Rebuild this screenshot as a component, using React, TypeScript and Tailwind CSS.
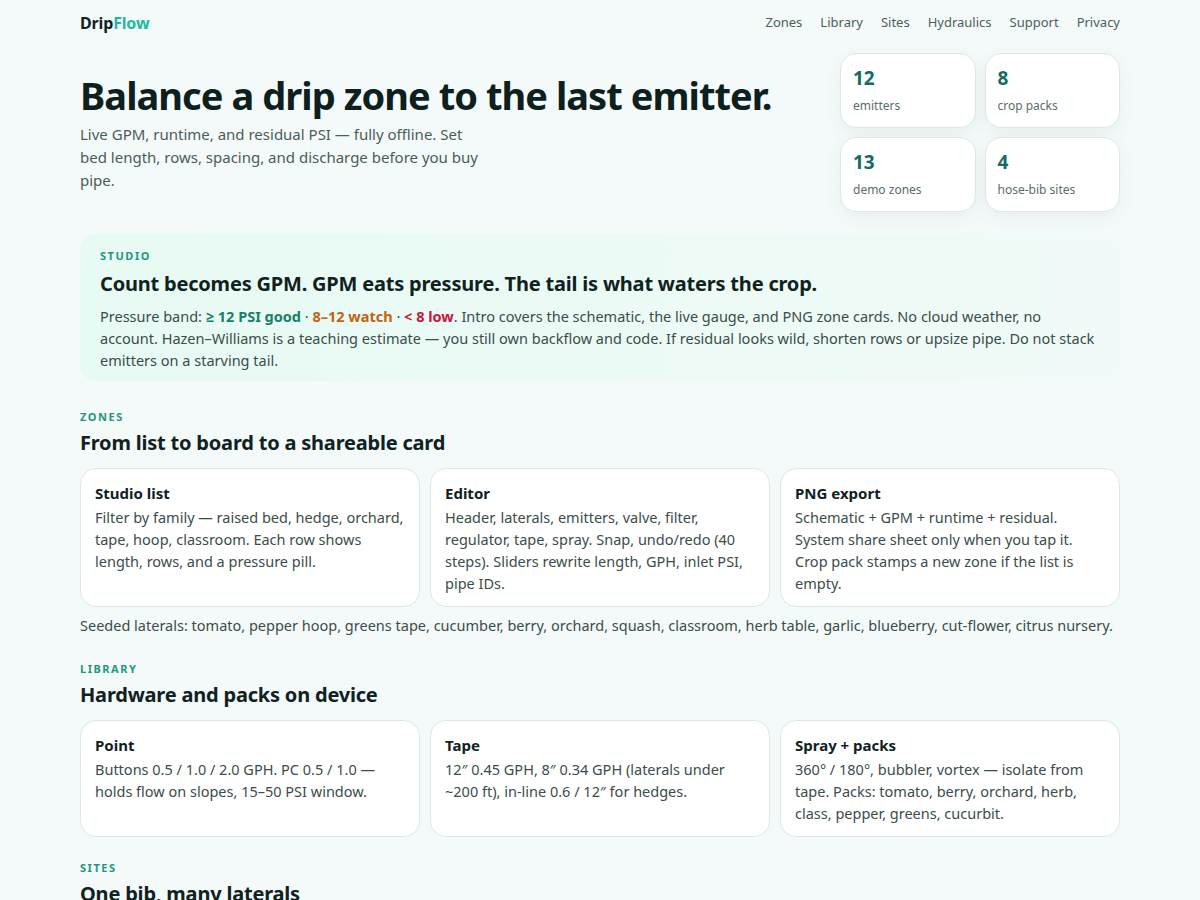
import React from "react";

type Card = { title: string; body: string };

const stats = [
  { value: "12", label: "emitters" },
  { value: "8", label: "crop packs" },
  { value: "13", label: "demo zones" },
  { value: "4", label: "hose-bib sites" },
];

const zoneCards: Card[] = [
  {
    title: "Studio list",
    body: "Filter by family — raised bed, hedge, orchard, tape, hoop, classroom. Each row shows length, rows, and a pressure pill.",
  },
  {
    title: "Editor",
    body: "Header, laterals, emitters, valve, filter, regulator, tape, spray. Snap, undo/redo (40 steps). Sliders rewrite length, GPH, inlet PSI, pipe IDs.",
  },
  {
    title: "PNG export",
    body: "Schematic + GPM + runtime + residual. System share sheet only when you tap it. Crop pack stamps a new zone if the list is empty.",
  },
];

const libraryCards: Card[] = [
  {
    title: "Point",
    body: "Buttons 0.5 / 1.0 / 2.0 GPH. PC 0.5 / 1.0 — holds flow on slopes, 15–50 PSI window.",
  },
  {
    title: "Tape",
    body: "12″ 0.45 GPH, 8″ 0.34 GPH (laterals under ~200 ft), in-line 0.6 / 12″ for hedges.",
  },
  {
    title: "Spray + packs",
    body: "360° / 180°, bubbler, vortex — isolate from tape. Packs: tomato, berry, orchard, herb, class, pepper, greens, cucurbit.",
  },
];

const navLinks = ["Zones", "Library", "Sites", "Hydraulics", "Support", "Privacy"];

function Eyebrow({ children }: { children: React.ReactNode }) {
  return (
    <div className="text-[11px] font-bold uppercase tracking-[0.14em] text-[#1f9683] leading-none">
      {children}
    </div>
  );
}

function CardGrid({ cards, tall }: { cards: Card[]; tall?: boolean }) {
  return (
    <div className="grid grid-cols-3 gap-[10px]">
      {cards.map((c) => (
        <div
          key={c.title}
          className={`rounded-2xl border border-[#dbe9e6] bg-white px-[14px] pt-[14px] pb-[12px] ${
            tall ? "min-h-[115px]" : ""
          }`}
        >
          <div className="text-[15px] font-bold leading-[20px] text-[#10221f]">{c.title}</div>
          <p className="mt-[3px] text-[14.5px] leading-[22px] text-[#3a4d4a]">{c.body}</p>
        </div>
      ))}
    </div>
  );
}

export default function App() {
  return (
    <div
      className="min-h-screen bg-[#f4faf9] text-[#10221f]"
      style={{ fontFamily: '"Noto Sans", "Open Sans", sans-serif' }}
    >
      <div className="mx-auto w-[1040px]">
        {/* top bar */}
        <header className="flex h-[46px] items-center justify-between">
          <div className="text-[16px] font-bold tracking-[-0.01em]">
            <span className="text-[#10221f]">Drip</span>
            <span className="text-[#22b8a0]">Flow</span>
          </div>
          <nav className="flex gap-[18px] text-[13px] text-[#4b5e5b]">
            {navLinks.map((n) => (
              <span key={n}>{n}</span>
            ))}
          </nav>
        </header>

        {/* hero */}
        <section className="mt-[7px] flex items-start justify-between">
          <div className="min-w-0 flex-1 pt-[18px]">
            <h1 className="whitespace-nowrap text-[38px] font-bold leading-[48px] tracking-[-0.025em] text-[#0d201d]">
              Balance a drip zone to the last emitter.
            </h1>
            <p className="mt-[4px] w-[410px] text-[15px] leading-[23px] text-[#4a5d5a]">
              Live GPM, runtime, and residual PSI — fully offline. Set bed length, rows, spacing, and
              discharge before you buy pipe.
            </p>
          </div>
          <div className="grid w-[280px] shrink-0 grid-cols-2 gap-[9px]">
            {stats.map((s) => (
              <div
                key={s.label}
                className="h-[75px] rounded-2xl border border-[#d9e9e5] bg-white px-[12px] pt-[12px] shadow-[0_6px_18px_rgba(20,90,80,0.06)]"
              >
                <div className="text-[19px] font-bold leading-[24px] text-[#146b60]">{s.value}</div>
                <div className="mt-[8px] text-[12px] leading-[16px] text-[#5a6d6a]">{s.label}</div>
              </div>
            ))}
          </div>
        </section>

        {/* studio callout */}
        <section className="mt-[22px] rounded-2xl bg-gradient-to-r from-[#e7faf3] to-[#f1faf8] px-[20px] pt-[16px] pb-[10px]">
          <Eyebrow>Studio</Eyebrow>
          <h2 className="mt-[9px] text-[20px] font-bold leading-[28px] tracking-[-0.01em] text-[#10221f]">
            Count becomes GPM. GPM eats pressure. The tail is what waters the crop.
          </h2>
          <p className="mt-[7px] text-[14.5px] leading-[22px] text-[#3a4d4a]">
            Pressure band: <b className="text-[#15806c]">≥ 12 PSI good</b> ·{" "}
            <b className="text-[#c4620f]">8–12 watch</b> · <b className="text-[#c8163e]">&lt; 8 low</b>.
            Intro covers the schematic, the live gauge, and PNG zone cards. No cloud weather, no
            account. Hazen–Williams is a teaching estimate — you still own backflow and code. If
            residual looks wild, shorten rows or upsize pipe. Do not stack emitters on a starving
            tail.
          </p>
        </section>

        {/* zones */}
        <section className="mt-[30px]">
          <Eyebrow>Zones</Eyebrow>
          <h2 className="mt-[7px] text-[20px] font-bold leading-[28px] tracking-[-0.01em]">
            From list to board to a shareable card
          </h2>
          <div className="mt-[11px]">
            <CardGrid cards={zoneCards} />
          </div>
          <p className="mt-[7px] text-[14.5px] leading-[22px] text-[#3a4d4a]">
            Seeded laterals: tomato, pepper hoop, greens tape, cucumber, berry, orchard, squash,
            classroom, herb table, garlic, blueberry, cut-flower, citrus nursery.
          </p>
        </section>

        {/* library */}
        <section className="mt-[27px]">
          <Eyebrow>Library</Eyebrow>
          <h2 className="mt-[7px] text-[20px] font-bold leading-[28px] tracking-[-0.01em]">
            Hardware and packs on device
          </h2>
          <div className="mt-[11px]">
            <CardGrid cards={libraryCards} tall />
          </div>
        </section>

        {/* sites */}
        <section className="mt-[25px] pb-[40px]">
          <Eyebrow>Sites</Eyebrow>
          <h2 className="mt-[7px] text-[20px] font-bold leading-[28px] tracking-[-0.01em]">
            One bib, many laterals
          </h2>
        </section>
      </div>
    </div>
  );
}
